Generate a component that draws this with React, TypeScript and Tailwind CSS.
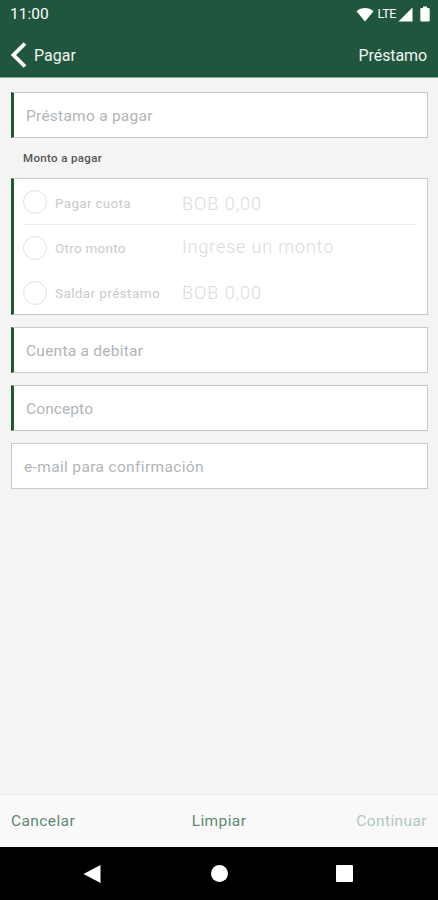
import React from 'react';
import clsx from 'clsx';

interface FieldProps {
  label: string;
  required?: boolean;
  className?: string;
}

const Field: React.FC<FieldProps> = ({ label, required = false, className }) => (
  <div
    className={clsx(
      'flex h-[46px] shrink-0 items-center border border-[#c8c8c8] bg-white pl-3 pt-[3px] text-[15.5px] text-[#b1b5b7]',
      required && 'border-l-[3px] border-l-[#1d5a2b]',
      className,
    )}
  >
    <span className="whitespace-nowrap">{label}</span>
  </div>
);

interface AmountRowProps {
  label: string;
  value: string;
  labelClass: string;
  valueClass: string;
}

const AmountRow: React.FC<AmountRowProps> = ({ label, value, labelClass, valueClass }) => (
  <div className="flex h-[45px] items-center">
    <span className="h-6 w-6 shrink-0 rounded-full border border-[#dfe1e1]" />
    <span className={clsx('ml-2 w-[127px] shrink-0 whitespace-nowrap text-[13.5px] text-[#cacbcc]', labelClass)}>
      {label}
    </span>
    <span className={clsx('whitespace-nowrap text-[18px] font-light text-[#d9dcde]', valueClass)}>{value}</span>
  </div>
);

const StatusBar: React.FC = () => (
  <div className="flex h-7 items-center justify-between pl-[10px] pr-2 text-white">
    <span className="pt-[2px] text-[15.5px]">11:00</span>
    <div className="flex items-center">
      <svg width="18" height="15" viewBox="0 0 18 15" fill="currentColor">
        <path d="M0.5 4.2C5.5 0 12.5 0 17.5 4.2L9 14.5Z" />
      </svg>
      <span className="ml-1 text-[12.5px] tracking-[-0.4px]">LTE</span>
      <svg className="ml-[2px]" width="15" height="15" viewBox="0 0 15 15" fill="currentColor">
        <path d="M14.5 0.5V14.5H0.5Z" />
      </svg>
      <svg className="ml-[7px]" width="10" height="16" viewBox="0 0 10 16" fill="currentColor">
        <path d="M3 0.5H7V2H8.5Q9.7 2 9.7 3.2V14.3Q9.7 15.5 8.5 15.5H1.5Q0.3 15.5 0.3 14.3V3.2Q0.3 2 1.5 2H3Z" />
      </svg>
    </div>
  </div>
);

const App: React.FC = () => {
  return (
    <div className="flex h-[900px] w-[438px] flex-col overflow-hidden bg-[#f4f4f4] font-['Roboto','Liberation_Sans',sans-serif]">
      <header className="h-[78px] shrink-0 border-b border-[#8fa79a] bg-[#20563e]">
        <StatusBar />
        <div className="flex h-[53px] items-center justify-between pl-[11px] pr-[11px] text-base text-[#eef3ef]">
          <div className="flex items-center">
            <svg width="16" height="26" viewBox="0 0 16 26" fill="none" stroke="#fff" strokeWidth="3.8">
              <path d="M14 1.5L2.5 13L14 24.5" />
            </svg>
            <span className="ml-[7px] pt-[2px]">Pagar</span>
          </div>
          <span className="pt-[2px] tracking-[-0.1px]">Préstamo</span>
        </div>
      </header>

      <main className="flex flex-1 flex-col pl-[11px] pr-[10px] pt-[14px]">
        <Field label="Préstamo a pagar" required className="tracking-[0.25px]" />
        <div className="flex h-10 items-center pl-3 pt-[1px] text-[11.5px] font-medium tracking-[0.35px] text-[#555]">
          Monto a pagar
        </div>

        <section className="h-[137px] shrink-0 border border-l-[3px] border-[#c8c8c8] border-l-[#1d5a2b] bg-white pl-[9px] pr-[10px]">
          <AmountRow label="Pagar cuota" value="BOB 0,00" labelClass="pt-[3px] tracking-[0.3px]" valueClass="pt-[3px] tracking-[1px]" />
          <div className="h-px bg-[#ececec]" />
          <AmountRow label="Otro monto" value="Ingrese un monto" labelClass="pt-[2px] tracking-[0.25px]" valueClass="-mt-[2px] tracking-[0.85px]" />
          <AmountRow label="Saldar préstamo" value="BOB 0,00" labelClass="pt-px tracking-[0.4px]" valueClass="tracking-[1px]" />
        </section>

        <div className="flex flex-col gap-3 pt-3">
          <Field label="Cuenta a debitar" required className="tracking-[0.25px]" />
          <Field label="Concepto" required className="tracking-[0.1px]" />
          <Field label="e-mail para confirmación" className="tracking-[0.35px]" />
        </div>
      </main>

      <footer className="grid h-[53px] shrink-0 grid-cols-3 items-center border-t border-[#ececec] bg-[#f8f9f8] px-[11px] pt-[2px] text-[15.5px] tracking-[0.4px] text-[#5f8873]">
        <span>Cancelar</span>
        <span className="text-center">Limpiar</span>
        <span className="text-right text-[#b2c8bc]">Continuar</span>
      </footer>

      <nav className="flex h-[53px] shrink-0 items-center bg-black text-white">
        <svg className="ml-[83px]" width="18" height="20" viewBox="0 0 18 20" fill="currentColor">
          <path d="M17.5 1V19L0.5 10Z" />
        </svg>
        <span className="ml-[110px] h-[17px] w-[17px] rounded-full bg-white" />
        <span className="ml-[108px] h-[17px] w-[17px] rounded-[1px] bg-white" />
      </nav>
    </div>
  );
};

export default App;
